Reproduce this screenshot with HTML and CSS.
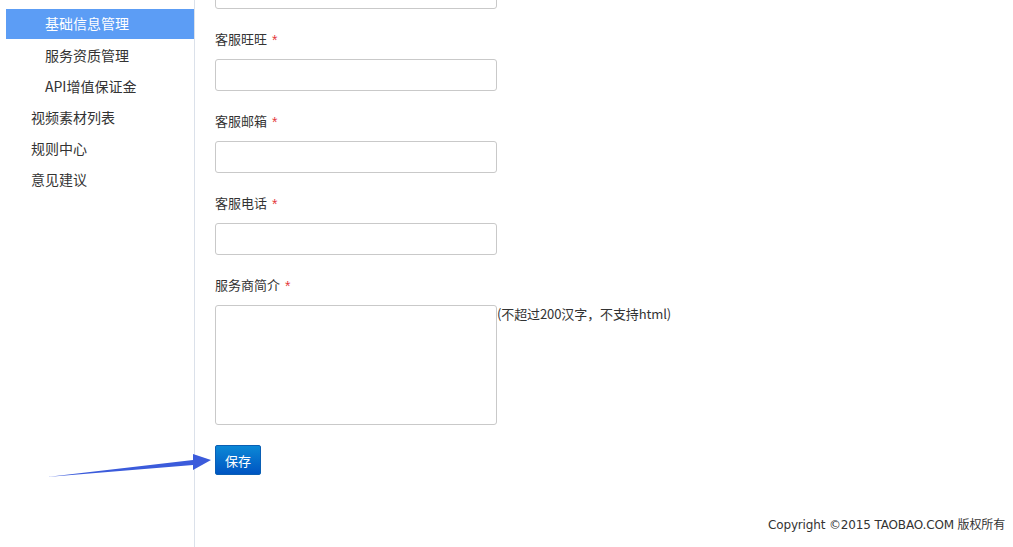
FILE: index.html
```html
<!DOCTYPE html>
<html lang="zh-CN">
<head>
<meta charset="utf-8">
<title>基础信息管理</title>
<link rel="stylesheet" href="styles.css">
</head>
<body>
<div class="page">
  <aside class="sidebar">
    <ul class="menu">
      <li class="item sub active">基础信息管理</li>
      <li class="item sub">服务资质管理</li>
      <li class="item sub">API增值保证金</li>
      <li class="item">视频素材列表</li>
      <li class="item">规则中心</li>
      <li class="item">意见建议</li>
    </ul>
  </aside>
  <main class="main">
    <form class="form">
      <div class="field first">
        <input class="input" type="text">
      </div>
      <div class="field">
        <label class="label">客服旺旺<span class="req">*</span></label>
        <input class="input" type="text">
      </div>
      <div class="field">
        <label class="label">客服邮箱<span class="req">*</span></label>
        <input class="input" type="text">
      </div>
      <div class="field">
        <label class="label">客服电话<span class="req">*</span></label>
        <input class="input" type="text">
      </div>
      <div class="field">
        <label class="label">服务商简介<span class="req">*</span></label>
        <div class="area-row">
          <textarea class="textarea"></textarea>
          <span class="hint">(不超过200汉字，不支持html)</span>
        </div>
      </div>
      <div class="actions">
        <button class="btn" type="button">保存</button>
      </div>
    </form>
    <footer class="footer">Copyright ©2015 TAOBAO.COM 版权所有</footer>
  </main>
</div>
<svg class="arrow" width="220" height="40" viewBox="0 0 220 40">
  <polygon points="47,27 193,10 193,4 211,10 193,20 193,15" fill="#3b5bdb"/>
</svg>
</body>
</html>
```

FILE: styles.css
```css
* { box-sizing: border-box; }
html, body { margin: 0; padding: 0; background: #fff; }
body {
  font-family: "Noto Sans CJK SC", "Liberation Sans", sans-serif;
  color: #333;
  font-size: 13px;
  width: 1013px;
  height: 547px;
  overflow: hidden;
  position: relative;
}
.page { display: flex; height: 547px; }
.sidebar {
  width: 195px;
  flex: none;
  border-right: 1px solid #dbe1ea;
  padding: 9px 0 0 6px;
}
.menu { list-style: none; margin: 0; padding: 0; }
.item {
  height: 31px;
  line-height: 30px;
  font-size: 14px;
  padding-left: 25px;
  color: #333;
}
.item.sub { padding-left: 39px; }
.item.active { background: #5c9df5; color: #fff; height: 30px; line-height: 29px; margin-bottom: 1px; }
.main {
  flex: 1;
  display: flex;
  flex-direction: column;
  padding-left: 20px;
  padding-right: 8px;
}
.form { display: flex; flex-direction: column; margin-top: -23px; }
.field { display: flex; flex-direction: column; margin-bottom: 20px; }
.label { line-height: 20px; height: 20px; margin-bottom: 10px; font-size: 13px; color: #333; }
.req {
  color: #e4393c;
  font-family: "Liberation Sans", sans-serif;
  font-size: 14px;
  margin-left: 5px;
  position: relative;
  top: 1px;
}
.input {
  width: 282px;
  height: 32px;
  border: 1px solid #c9c9c9;
  border-radius: 3px;
  margin: 0;
  padding: 0 6px;
  background: #fff;
}
.area-row { display: flex; align-items: flex-start; }
.textarea {
  width: 282px;
  height: 120px;
  border: 1px solid #c9c9c9;
  border-radius: 3px;
  margin: 0;
  resize: none;
  padding: 4px 6px;
}
.hint { font-size: 13px; line-height: 18px; color: #333; letter-spacing: -0.1px; }
.actions { display: flex; }
.btn {
  width: 46px;
  height: 30px;
  border: 1px solid #0a5fb4;
  border-radius: 2px;
  background: linear-gradient(#0b88d6, #0055c2);
  color: #fff;
  font-family: "Noto Sans CJK SC", sans-serif;
  font-size: 13px;
  padding: 0;
}
.footer {
  margin-top: auto;
  margin-bottom: 13px;
  align-self: flex-end;
  font-family: "DejaVu Sans", "Noto Sans CJK SC", sans-serif;
  font-size: 12px;
  letter-spacing: -0.15px;
  color: #333;
  line-height: 18px;
}
.arrow { position: absolute; left: 0; top: 450px; }
```
